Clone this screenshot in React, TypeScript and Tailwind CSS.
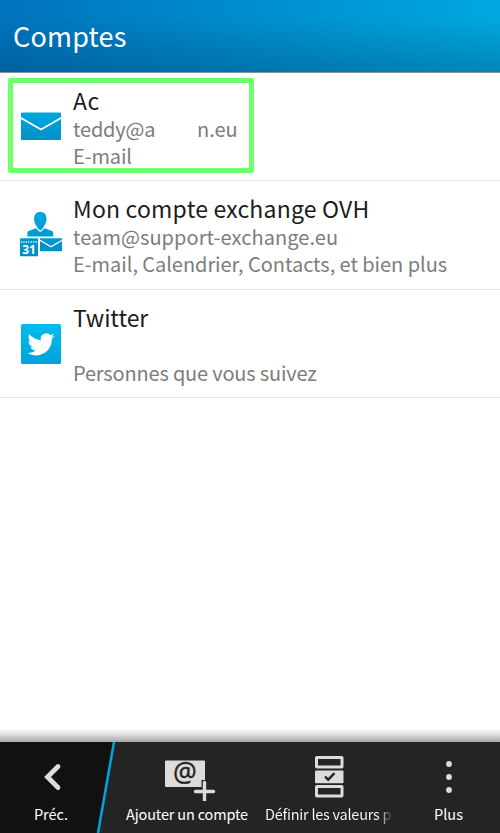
import type { ReactNode } from 'react';

function MailIcon() {
  return (
    <svg width="50" height="34" viewBox="0 0 50 34" className="block max-w-none shrink-0">
      <defs>
        <linearGradient id="mail" x1="0" y1="0" x2="0" y2="1">
          <stop offset="0" stopColor="#00a8df" />
          <stop offset="1" stopColor="#0090c6" />
        </linearGradient>
      </defs>
      <rect x="5" y="2.500" width="40" height="27.500" rx="1" fill="url(#mail)" />
      <path d="M4.500 7.800 25 19.500 45.500 7.800" fill="none" stroke="#fff" strokeWidth="1.700" />
    </svg>
  );
}

function ExchangeIcon() {
  return (
    <svg width="50" height="50" viewBox="0 0 50 50" className="block max-w-none shrink-0">
      <defs>
        <linearGradient id="exch" gradientUnits="userSpaceOnUse" x1="0" y1="2" x2="0" y2="46">
          <stop offset="0" stopColor="#00a8df" />
          <stop offset="1" stopColor="#008fc4" />
        </linearGradient>
      </defs>
      <g fill="url(#exch)">
        <path d="M24.300 2c4 0 6.200 2.700 6.200 6.800 0 3.200-1 5.700-2.700 7.200v1.200l-3.500 3.600-3.500-3.600V16c-1.700-1.500-2.700-4-2.700-7.200C18.100 4.700 20.300 2 24.300 2z" />
        <path d="M19.800 18.200 24.300 22.300l4.500-4.100 7.200 2.700c.8.300 1.200 1 1.200 2V26.500H11.400v-3.600c0-1 .4-1.700 1.200-2z" />
        <rect x="4" y="28.300" width="18" height="18" rx=".6" />
        <rect x="24" y="28.300" width="22" height="13" rx=".5" />
      </g>
      <path d="M5 32h16" stroke="#fff" strokeWidth="1.300" strokeDasharray="1.200 1.200" />
      <path d="m23.500 30 11.500 6.700 11.500-6.700" fill="none" stroke="#fff" strokeWidth="1.300" />
      <text x="13" y="44.300" textAnchor="middle" fill="#fff" fontSize="12" fontWeight="700" fontFamily="Noto Sans, sans-serif">31</text>
    </svg>
  );
}

function TwitterIcon() {
  return (
    <svg width="50" height="40" viewBox="0 0 50 40" className="block max-w-none shrink-0">
      <defs>
        <linearGradient id="twit" x1="0" y1="0" x2="0" y2="1">
          <stop offset="0" stopColor="#00bdec" />
          <stop offset="1" stopColor="#00a2dc" />
        </linearGradient>
      </defs>
      <rect x="5" y="0" width="40" height="40" rx="1.500" fill="url(#twit)" />
      <path
        transform="translate(11.500 6.800) scale(1.130)"
        fill="#fff"
        d="M23.953 4.570a10 10 0 01-2.825.775 4.958 4.958 0 002.163-2.723c-.951.555-2.005.959-3.127 1.184a4.920 4.920 0 00-8.384 4.482C7.690 8.095 4.067 6.130 1.640 3.162a4.822 4.822 0 00-.666 2.475c0 1.710.870 3.213 2.188 4.096a4.904 4.904 0 01-2.228-.616v.060a4.923 4.923 0 003.946 4.827 4.996 4.996 0 01-2.212.085 4.936 4.936 0 004.604 3.417 9.867 9.867 0 01-6.102 2.105c-.390 0-.779-.023-1.170-.067a13.995 13.995 0 007.557 2.209c9.053 0 13.998-7.496 13.998-13.985 0-.210 0-.420-.015-.630A9.935 9.935 0 0024 4.590z"
      />
    </svg>
  );
}

function BackIcon() {
  return (
    <svg width="24" height="28" viewBox="0 0 24 28" className="block">
      <path d="M19 3.500 8.500 14 19 24.500" fill="none" stroke="#dcdcdc" strokeWidth="4.800" strokeLinecap="round" strokeLinejoin="miter" />
    </svg>
  );
}

function AddAccountIcon() {
  return (
    <svg width="52" height="46" viewBox="0 0 52 46" className="block">
      <rect x="1" y="5.500" width="40" height="26.500" rx="1" fill="#dcdcdc" />
      <text x="21" y="26.500" textAnchor="middle" fontSize="26.500" fontWeight="400" stroke="#242424" strokeWidth=".3" fill="#242424" fontFamily="Noto Sans, sans-serif">@</text>
      <path d="M40.500 25v20M31 36.500h20" stroke="#242424" strokeWidth="6" />
      <path d="M40.500 27.500v18M31.500 36.500h18" stroke="#dcdcdc" strokeWidth="3.400" strokeLinecap="round" />
    </svg>
  );
}

function DefaultsIcon() {
  return (
    <svg width="30" height="44" viewBox="0 0 30 44" className="block">
      <g fill="none" stroke="#dcdcdc" strokeWidth="3">
        <rect x="2.500" y="2.500" width="25.500" height="9.500" rx=".3" />
        <rect x="2.500" y="31.500" width="25.500" height="9.500" rx=".3" />
      </g>
      <rect x="1" y="15.500" width="28.500" height="12.800" rx="1" fill="#dcdcdc" />
      <path d="m11 21.500 3.200 3.200 6.300-6.500" fill="none" stroke="#242424" strokeWidth="2.400" />
    </svg>
  );
}

function MoreIcon() {
  return (
    <svg width="8" height="34" viewBox="0 0 8 34" className="block" fill="#dcdcdc">
      <circle cx="4" cy="4" r="2.900" />
      <circle cx="4" cy="17" r="2.900" />
      <circle cx="4" cy="30" r="2.900" />
    </svg>
  );
}

type RowProps = {
  icon: ReactNode;
  title: ReactNode;
  address: ReactNode;
  detail: ReactNode;
  className: string;
  highlighted?: boolean;
};

function AccountRow({ icon, title, address, detail, className, highlighted }: RowProps) {
  return (
    <li className={`relative flex shrink-0 border-b border-[#e6e6e6] ${className}`}>
      <div className="flex w-[57px] shrink-0 items-center pl-4">{icon}</div>
      <div className="ml-4 whitespace-nowrap text-[20px] leading-[27px] text-[#7d7d7d]">
        <div className="h-[29px] text-[23px] leading-[29px] text-[#1c1c1c]">{title}</div>
        <div className="h-[27px]">{address}</div>
        <div className="h-[27px]">{detail}</div>
      </div>
      {highlighted && (
        <div className="absolute left-2 top-[5px] h-[95px] w-[246px] rounded-[2px] border-[5px] border-[#70ff68]" />
      )}
    </li>
  );
}

export default function App() {
  return (
    <div className="flex h-[833px] w-[500px] flex-col overflow-hidden bg-white font-['Noto_Sans_CJK_SC','Noto_Sans',sans-serif]">
      <header className="h-[73px] shrink-0 border-b border-[#85929a] bg-[linear-gradient(to_right,#0073bd,#008dce_50%,#00a8df)]">
        <div className="flex h-full items-center bg-[linear-gradient(to_bottom,transparent_25%,rgba(0,50,80,0.28))] pl-[13px]">
          <h1 className="text-[27px] leading-9 tracking-[0.2px] text-white">Comptes</h1>
        </div>
      </header>
      <main className="min-h-0 flex-1">
        <ul>
          <AccountRow
            highlighted
            className="h-[108px] pt-[13px] [&_svg]:-mt-[13px]"
            icon={<MailIcon />}
            title={<span className="tracking-[0.4px]">Ac</span>}
            address={
              <span className="flex">
                <span className="w-[124px] tracking-[-0.2px]">teddy@a</span>
                <span>n.eu</span>
              </span>
            }
            detail={<span className="tracking-[-0.15px]">E-mail</span>}
          />
          <AccountRow
            className="h-[109px] pt-[13px] [&_svg]:-mt-[13px]"
            icon={<ExchangeIcon />}
            title={<span className="tracking-[0.2px]">Mon compte exchange OVH</span>}
            address={<span className="tracking-[0.06px]">team@support-exchange.eu</span>}
            detail={<span className="tracking-[-0.05px]">E-mail, Calendrier, Contacts, et bien plus</span>}
          />
          <AccountRow
            className="h-[108px] pt-[13px] [&_svg]:-mt-[13px]"
            icon={<TwitterIcon />}
            title={<span className="tracking-[-0.1px]">Twitter</span>}
            address={null}
            detail={<span className="tracking-[-0.18px]">Personnes que vous suivez</span>}
          />
        </ul>
      </main>
      <div className="h-[14px] shrink-0 bg-[linear-gradient(to_bottom,#ffffff,#e8e8e8_35%,#a8a8a8)]" />
      <footer className="relative flex h-[91px] shrink-0 whitespace-nowrap bg-[#242424] text-[14.500px] leading-5 text-white">
        <svg width="118" height="91" viewBox="0 0 118 91" className="absolute left-0 top-0">
          <path d="M0 0h114L98 91H0z" fill="#111" />
          <path d="M114 0 98 91" stroke="#00a4df" strokeWidth="2.500" />
        </svg>
        <button className="relative flex w-[102px] flex-col items-center">
          <span className="flex h-[62px] items-center pt-2"><BackIcon /></span>
          <span>Préc.</span>
        </button>
        <button className="ml-2 flex w-[154px] flex-col items-center">
          <span className="flex h-[62px] items-center pl-[6px] pt-[10px]"><AddAccountIcon /></span>
          <span className="tracking-[-0.17px]">Ajouter un compte</span>
        </button>
        <button className="ml-px flex w-[128px] flex-col items-center">
          <span className="flex h-[62px] items-center pt-[7px]"><DefaultsIcon /></span>
          <span className="w-[128px] bg-[linear-gradient(to_right,#fff_113px,#444_126px)] bg-clip-text text-left tracking-[-0.25px] text-transparent">
            Définir les valeurs p
          </span>
        </button>
        <button className="ml-1 flex w-[102px] flex-col items-center">
          <span className="flex h-[62px] items-center pl-px pt-2"><MoreIcon /></span>
          <span className="pl-px">Plus</span>
        </button>
      </footer>
    </div>
  );
}
